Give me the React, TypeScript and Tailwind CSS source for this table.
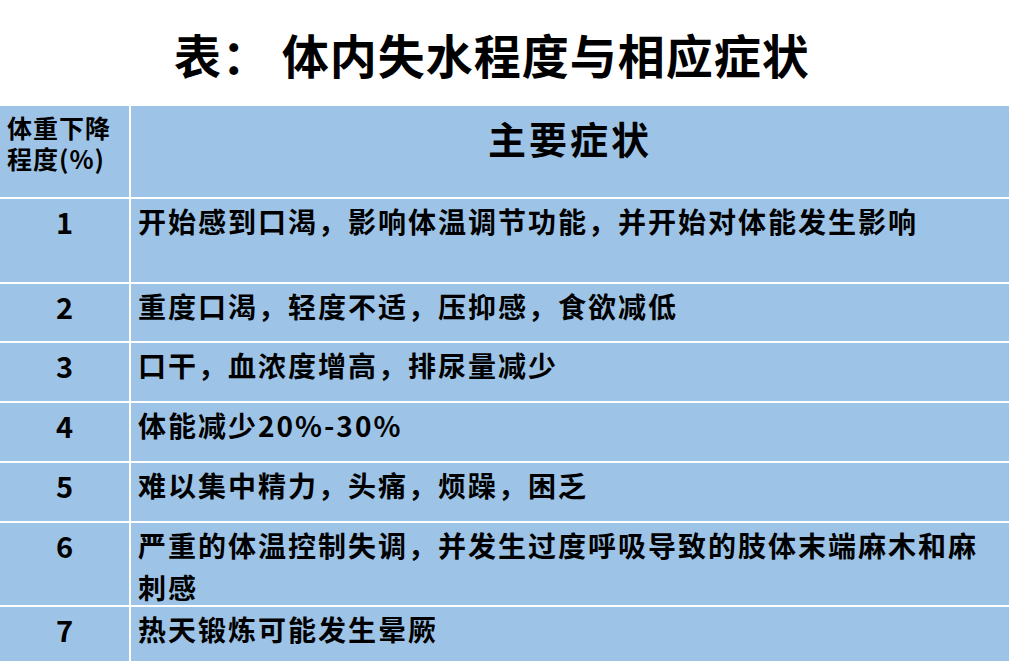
import React from 'react';

const rows: { n: string; text: string; h: string }[] = [
  { n: '1', text: '开始感到口渴，影响体温调节功能，并开始对体能发生影响', h: 'h-[85px]' },
  { n: '2', text: '重度口渴，轻度不适，压抑感，食欲减低', h: 'h-[59px]' },
  { n: '3', text: '口干，血浓度增高，排尿量减少', h: 'h-[60px]' },
  { n: '4', text: '体能减少20%-30%', h: 'h-[60px]' },
  { n: '5', text: '难以集中精力，头痛，烦躁，困乏', h: 'h-[60px]' },
  { n: '6', text: '严重的体温控制失调，并发生过度呼吸导致的肢体末端麻木和麻刺感', h: 'h-[84px]' },
  { n: '7', text: '热天锻炼可能发生晕厥', h: 'h-[56px]' },
];

export default function App() {
  return (
    <div className="w-[1011px] h-[661px] bg-white overflow-hidden text-black font-['Noto_Sans_CJK_SC',sans-serif]">
      <h1 className="h-[106px] flex items-center pl-[174px] text-[47px] font-bold tracking-[1px] leading-none">
        表：&nbsp;体内失水程度与相应症状
      </h1>

      <div className="w-[1010px] bg-[#9dc3e6] border-r border-white">
        {/* header */}
        <div className="flex h-[91px]">
          <div className="w-[129px] shrink-0 pl-[7px] pt-[6px] text-[25px] leading-[31px] font-bold tracking-[1px]">
            体重下降
            <br />
            程度(%)
          </div>
          <div className="flex-1 border-l-2 border-white pt-[8px] text-center text-[38px] leading-[48px] font-bold tracking-[3px]">
            主要症状
          </div>
        </div>

        {rows.map((r) => (
          <div key={r.n} className={`flex border-t-2 border-white ${r.h}`}>
            <div className="w-[129px] shrink-0 pt-[1px] text-center text-[29px] leading-[42px] font-bold">
              {r.n}
            </div>
            <div className="flex-1 border-l-2 border-white pl-[7px] pr-[20px] pt-[1px] text-[28px] leading-[42px] font-bold tracking-[2px]">
              {r.text}
            </div>
          </div>
        ))}
      </div>
    </div>
  );
}
